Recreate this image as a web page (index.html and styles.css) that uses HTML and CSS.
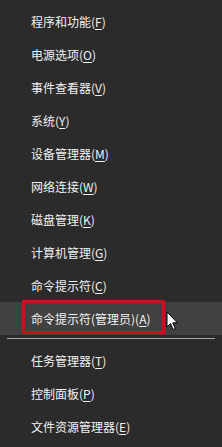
FILE: index.html
```html
<!DOCTYPE html>
<html lang="zh-CN">

<head>
    <meta charset="UTF-8">
    <meta name="viewport" content="width=device-width, initial-scale=1.0">
    <title>Win+X 菜单</title>
    <link rel="stylesheet" href="styles.css">
</head>

<body>
    <ul class="menu">
        <li class="menu-item">程序和功能(<u>F</u>)</li>
        <li class="menu-item">电源选项(<u>O</u>)</li>
        <li class="menu-item">事件查看器(<u>V</u>)</li>
        <li class="menu-item">系统(<u>Y</u>)</li>
        <li class="menu-item">设备管理器(<u>M</u>)</li>
        <li class="menu-item">网络连接(<u>W</u>)</li>
        <li class="menu-item">磁盘管理(<u>K</u>)</li>
        <li class="menu-item">计算机管理(<u>G</u>)</li>
        <li class="menu-item">命令提示符(<u>C</u>)</li>
        <li class="menu-item active">
            命令提示符(管理员)(<u>A</u>)
            <span class="mark"></span>
            <svg class="cursor" width="13" height="20" viewBox="0 0 13 20">
                <path d="M1 1 L1 16 L4.5 12.5 L7 18.5 L9.3 17.5 L6.8 11.8 L11.5 11.8 Z" fill="#fff" stroke="#000" stroke-width="1"/>
            </svg>
        </li>
        <li class="separator"></li>
        <li class="menu-item">任务管理器(<u>T</u>)</li>
        <li class="menu-item">控制面板(<u>P</u>)</li>
        <li class="menu-item">文件资源管理器(<u>E</u>)</li>
    </ul>
</body>

</html>
```

FILE: styles.css
```css
body {
    margin: 0;
    background-color: #2b2b2b;
    font-family: "Noto Sans CJK SC", "Microsoft YaHei", sans-serif;
    font-size: 12px;
    color: #f2f2f2;
}

.menu {
    list-style: none;
    margin: 0;
    padding: 5px 0 0;
}

.menu-item {
    position: relative;
    height: 33px;
    line-height: 33px;
    padding-left: 31px;
    white-space: nowrap;
}

.menu-item u {
    text-decoration-thickness: 1px;
    text-underline-offset: 2px;
}

.menu-item.active {
    background-color: #414141;
}

.mark {
    position: absolute;
    left: 22px;
    top: -2px;
    width: 137px;
    height: 28px;
    border: 3px solid #c8131c;
}

.cursor {
    position: absolute;
    left: 166px;
    top: 9px;
}

.separator {
    height: 9px;
    position: relative;
}

.separator::before {
    content: "";
    position: absolute;
    left: 7px;
    right: 7px;
    top: 3px;
    height: 1px;
    background-color: #a8a8a8;
}
```
